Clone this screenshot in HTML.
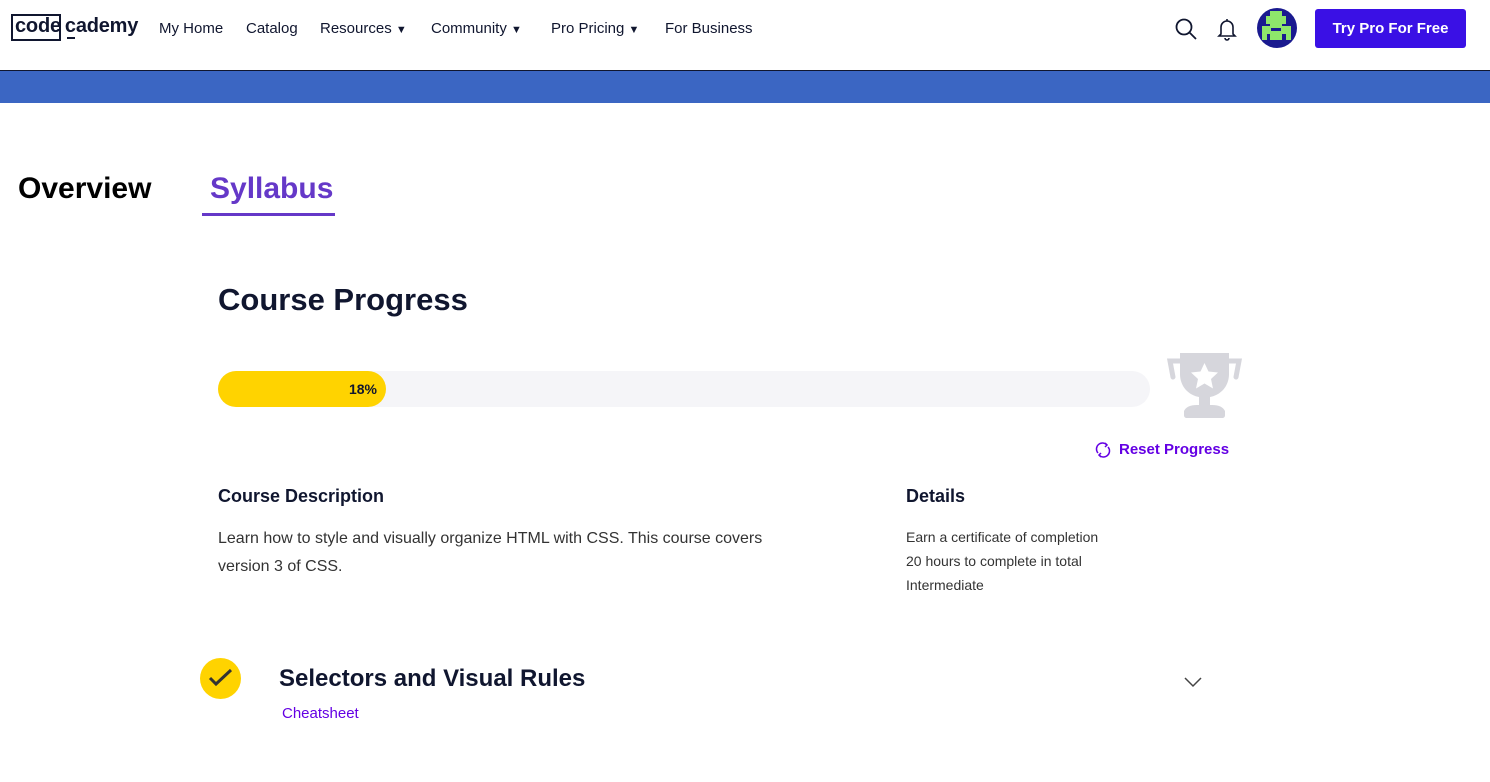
<!DOCTYPE html>
<html><head><meta charset="utf-8"><style>
*{margin:0;padding:0;box-sizing:border-box}
body{width:1490px;height:782px;overflow:hidden;background:#fff;font-family:"Liberation Sans",sans-serif;color:#10162f;position:relative}
.a{position:absolute;white-space:nowrap}
.nav{font-size:15px;color:#10162f;top:20px}
</style></head><body>
<div class="a" style="left:11px;top:14px;width:50px;height:27px;border:2.5px solid #10162f"></div>
<div class="a" style="left:15px;top:15px;font-size:20px;font-weight:bold;color:#10162f;letter-spacing:-0.2px">code<span style="margin-left:4px">cademy</span></div>
<div class="a" style="left:67px;top:37px;width:8px;height:2px;background:#10162f"></div>
<div class="a nav" style="left:159px">My Home</div>
<div class="a nav" style="left:246px">Catalog</div>
<div class="a nav" style="left:320px">Resources <span style="font-size:11px">▼</span></div>
<div class="a nav" style="left:431px">Community <span style="font-size:11px">▼</span></div>
<div class="a nav" style="left:551px">Pro Pricing <span style="font-size:11px">▼</span></div>
<div class="a nav" style="left:665px">For Business</div>
<svg class="a" style="left:1174px;top:17px" width="24" height="24" viewBox="0 0 24 24" fill="none" stroke="#10162f" stroke-width="1.8"><circle cx="10" cy="10" r="7.5"/><path d="M15.5 15.5L22 22"/></svg>
<svg class="a" style="left:1216px;top:17px" width="22" height="24" viewBox="0 0 22 24" fill="none" stroke="#10162f" stroke-width="1.6"><path d="M11 2v2M5 17V10a6 6 0 0 1 12 0v7l2 2H3z"/><path d="M9 21a2 2 0 0 0 4 0"/></svg>
<svg class="a" style="left:1257px;top:8px" width="40" height="40" viewBox="0 0 40 40"><circle cx="20" cy="20" r="20" fill="#1a1a8f"/><path fill="#8ee66b" d="M13 3h12v5h4v8h-4v4h-12v-4h-4v-8h4z"/><path fill="#8ee66b" d="M5 18h9v5h10v-5h10v14h-5v-6h-4v6h-12v-6h-3v6h-5z"/></svg>
<div class="a" style="left:1315px;top:9px;width:151px;height:39px;background:#3a10e5;border-radius:3px;color:#fff;font-weight:bold;font-size:15px;text-align:center;line-height:39px">Try Pro For Free</div>
<div class="a" style="left:0;top:70px;width:1490px;height:1px;background:#10162f"></div>
<div class="a" style="left:0;top:71px;width:1490px;height:32px;background:#3b66c3"></div>
<div class="a" style="left:18px;top:172px;font-size:30px;font-weight:bold;color:#000">Overview</div>
<div class="a" style="left:210px;top:172px;font-size:30px;font-weight:bold;color:#6538c8">Syllabus</div>
<div class="a" style="left:202px;top:213px;width:133px;height:3px;background:#6538c8"></div>
<div class="a" style="left:218px;top:282px;font-size:31px;font-weight:bold;color:#10162f">Course Progress</div>
<div class="a" style="left:218px;top:371px;width:932px;height:36px;background:#f5f5f8;border-radius:18px"></div>
<div class="a" style="left:218px;top:371px;width:168px;height:36px;background:#ffd300;border-radius:18px;font-size:14px;font-weight:bold;text-align:right;padding-right:9px;line-height:36px;color:#10162f">18%</div>
<svg class="a" style="left:1166px;top:351px" width="77" height="77" viewBox="0 0 77 77"><g fill="none" stroke="#d6d6dc" stroke-width="5" stroke-linecap="round"><path d="M14 10H4l3 16M63 10h10l-3 16"/></g><path fill="#d6d6dc" d="M14 2h49v21c0 12-8 21-19 23v8h2c7 0 11 2 13 6v4c0 2-1 3-3 3H21c-2 0-3-1-3-3v-4c2-4 6-6 13-6h2v-8C22 44 14 35 14 23z"/><path fill="#fff" d="M38.5 12l4 8.5 9.5 1-7 6.5 2 9.5-8.5-5-8.5 5 2-9.5-7-6.5 9.5-1z"/></svg>
<svg class="a" style="left:1095px;top:442px" width="16" height="16" viewBox="0 0 16 16" fill="none" stroke="#6400e4" stroke-width="1.5"><path d="M3 11A6 6 0 0 1 12 3"/><path d="M13 5A6 6 0 0 1 4 13"/><path d="M10 1l2 2-2 2M6 15l-2-2 2-2"/></svg>
<div class="a" style="left:1119px;top:441px;font-size:15px;font-weight:bold;color:#6400e4">Reset Progress</div>
<div class="a" style="left:218px;top:486px;font-size:18px;font-weight:bold">Course Description</div>
<div class="a" style="left:218px;top:525px;font-size:16px;line-height:28px;color:#333;white-space:normal;width:600px">Learn how to style and visually organize HTML with CSS. This course covers version 3 of CSS.</div>
<div class="a" style="left:906px;top:486px;font-size:18px;font-weight:bold">Details</div>
<div class="a" style="left:906px;top:525px;font-size:14px;line-height:24px;color:#333">Earn a certificate of completion<br>20 hours to complete in total<br>Intermediate</div>
<div class="a" style="left:200px;top:658px;width:41px;height:41px;border-radius:50%;background:#ffd300"></div>
<svg class="a" style="left:207px;top:666px" width="28" height="24" viewBox="0 0 28 24" fill="none" stroke="#333" stroke-width="3"><path d="M3 12l6 6L24 4"/></svg>
<div class="a" style="left:279px;top:665px;font-size:24px;font-weight:bold;color:#10162f">Selectors and Visual Rules</div>
<div class="a" style="left:282px;top:705px;font-size:15px;color:#6400e4">Cheatsheet</div>
<svg class="a" style="left:1184px;top:676px" width="18" height="12" viewBox="0 0 18 12" fill="none" stroke="#444" stroke-width="1.5"><path d="M1 2l8 8 8-8"/></svg>
</body></html>
